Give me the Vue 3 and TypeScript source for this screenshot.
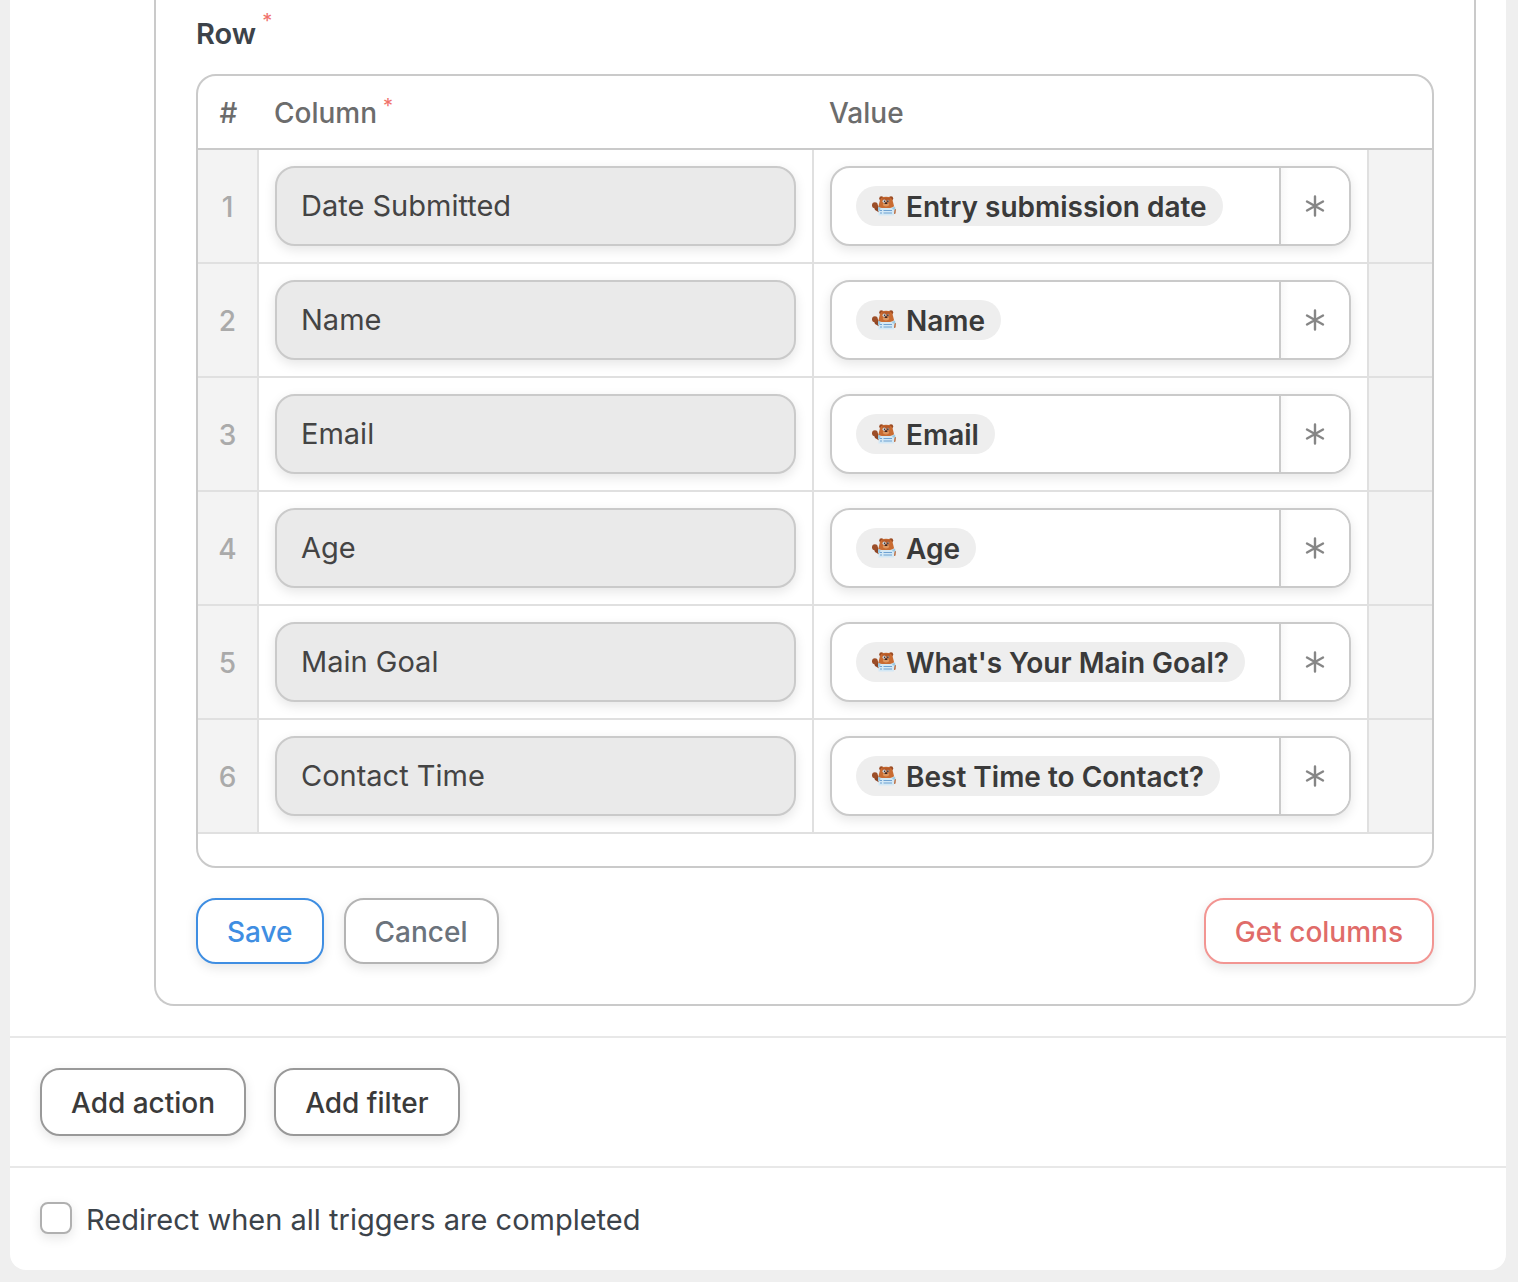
<script setup lang="ts">
import { ref } from 'vue'

interface Mapping {
  column: string
  value: string
}

const rows = ref<Mapping[]>([
  { column: 'Date Submitted', value: 'Entry submission date' },
  { column: 'Name', value: 'Name' },
  { column: 'Email', value: 'Email' },
  { column: 'Age', value: 'Age' },
  { column: 'Main Goal', value: "What's Your Main Goal?" },
  { column: 'Contact Time', value: 'Best Time to Contact?' },
])

const redirect = ref(false)
</script>

<template>
  <main class="page">
    <section class="card">
      <div class="step">
        <form class="panel" @submit.prevent>
          <h2 class="panel-title">Row<sup class="required">*</sup></h2>

          <div class="grid">
            <table class="mapping">
              <colgroup>
                <col class="col-index" />
                <col />
                <col />
                <col class="col-end" />
              </colgroup>
              <thead>
                <tr>
                  <th class="index-head" scope="col">#</th>
                  <th scope="col">Column<sup class="required">*</sup></th>
                  <th scope="col">Value</th>
                  <td></td>
                </tr>
              </thead>
              <tbody>
                <tr v-for="(row, i) in rows" :key="row.column">
                  <td class="index">{{ i + 1 }}</td>
                  <td class="field-cell">
                    <input class="column-input" type="text" readonly :value="row.column" :aria-label="`Column ${i + 1}`" />
                  </td>
                  <td class="field-cell">
                    <div class="value-field">
                      <div class="value-content">
                        <span class="chip">
                          <svg class="bear" viewBox="0 0 24 20" aria-hidden="true">
                            <path d="M1 9 5.500 9 8 13 8 17 3 14Z" fill="#8f4524" />
                            <circle cx="2.900" cy="9.200" r="2.900" fill="#9c4e28" />
                            <circle cx="9.400" cy="2.400" r="2.200" fill="#9a4a22" />
                            <circle cx="19" cy="2.400" r="2.200" fill="#9a4a22" />
                            <path d="M7.500 6Q8 .8 14 .8Q20.500 .8 21 6L22 10Q20 14 14 14Q7 14 6.500 10Z" fill="#c96b31" />
                            <path d="M10 2.500Q14 .5 18.500 2.500L17 4.500H11Z" fill="#b55a29" />
                            <circle cx="12.200" cy="5.200" r="1.700" fill="#c9cfd4" />
                            <circle cx="16" cy="5.200" r="1.400" fill="#a8897a" />
                            <circle cx="12.600" cy="5.300" r=".7" fill="#30282a" />
                            <circle cx="15.800" cy="5.300" r=".7" fill="#30282a" />
                            <ellipse cx="14" cy="8.600" rx="3.200" ry="1.800" fill="#dd965f" />
                            <ellipse cx="14" cy="7.200" rx="1.500" ry=".9" fill="#3b2421" />
                            <path d="M20.500 13 23.900 13 23.500 17.500 20.500 18.500Z" fill="#b6602f" />
                            <path d="M6.500 11.500 10 12 18 12 23 10.500 21.800 19.500H6.500Z" fill="#d3e8f5" />
                            <path d="M6 11 8.500 11.800 8 15H6ZM20 12 23 10.500 23.500 13.500H21Z" fill="#9ccbe4" />
                            <path d="M8 14.500H10M11.500 14.500H20M8 17H10M11.500 17H20" stroke="#6fa2d2" />
                          </svg>
                          <span>{{ row.value }}</span>
                        </span>
                      </div>
                      <button class="token-button" type="button" :aria-label="`Insert field for ${row.column}`">
                        <svg viewBox="0 0 22 22" aria-hidden="true">
                          <path d="M11 1.500V20.500M3 6.500 19 15.500M3 15.500 19 6.500" />
                        </svg>
                      </button>
                    </div>
                  </td>
                  <td class="end"></td>
                </tr>
              </tbody>
            </table>
          </div>

          <div class="panel-actions">
            <button class="btn save" type="submit">Save</button>
            <button class="btn cancel" type="button">Cancel</button>
            <button class="btn fetch" type="button">Get columns</button>
          </div>
        </form>
      </div>

      <div class="add-bar">
        <button class="btn add" type="button">Add action</button>
        <button class="btn add" type="button">Add filter</button>
      </div>

      <div class="redirect">
        <input id="redirect" v-model="redirect" type="checkbox" />
        <label for="redirect">Redirect when all triggers are completed</label>
      </div>
    </section>
  </main>
</template>

<style>
body {
  background: #efefef;
}
</style>

<style scoped>
.page {
  padding: 0 12px 12px 10px;
  font-family: Inter, "Liberation Sans", sans-serif;
  font-size: 28px;
  color: #3c434a;
}

.page * {
  box-sizing: border-box;
}

.card {
  background: #fff;
  border-radius: 0 0 16px 16px;
}

.step {
  padding: 0 30px 30px 144px;
}

.panel {
  padding: 14px 40px 40px;
  border: 2px solid #cacaca;
  border-top: 0;
  border-radius: 0 0 20px 20px;
}

.panel-title {
  margin: 0 0 20px;
  font-size: 29px;
  line-height: 40px;
  font-weight: 600;
}

.required {
  margin-left: 6px;
  font-size: 20px;
  line-height: 0;
  font-weight: 400;
  color: #f0716b;
}

.panel-title .required {
  vertical-align: 16px;
}

.grid {
  padding-bottom: 32px;
  border: 2px solid #cacaca;
  border-radius: 20px;
}

.mapping {
  width: 100%;
  table-layout: fixed;
  border-collapse: separate;
  border-spacing: 0;
}

.col-index {
  width: 61px;
}

.col-end {
  width: 63px;
}

.mapping thead th,
.mapping thead td {
  height: 74px;
  padding: 2px 15px 0;
  border-bottom: 2px solid #cacaca;
  color: #6c6c6c;
  font-weight: 500;
  line-height: 40px;
  text-align: left;
}

.mapping thead .index-head {
  padding: 2px 0 0;
  text-align: center;
}

.mapping tbody td {
  border-bottom: 2px solid #e0e0e0;
}

.mapping tbody td:not(:last-child) {
  border-right: 2px solid #e0e0e0;
}

.mapping tbody .index,
.mapping tbody .end {
  padding: 2px 0 0;
  background: #f3f3f3;
}

.index {
  color: #aaa;
  font-weight: 500;
  text-align: center;
}

.field-cell {
  padding: 16px;
}

.column-input {
  display: block;
  width: 100%;
  height: 80px;
  padding: 0 24px 2px;
  border: 2px solid #cacaca;
  border-radius: 20px;
  background: #eaeaea;
  box-shadow: 0 4px 12px rgba(0, 0, 0, 0.1);
  color: #444;
  font: inherit;
  font-size: 29px;
}

.value-field {
  display: flex;
  height: 80px;
  border: 2px solid #cacaca;
  border-radius: 20px;
  background: #fff;
  box-shadow: 0 4px 12px rgba(0, 0, 0, 0.1);
}

.value-content {
  display: flex;
  flex: 1;
  align-items: center;
  min-width: 0;
  padding: 0 24px;
}

.chip {
  display: flex;
  align-items: center;
  gap: 10px;
  height: 40px;
  padding: 0 16px;
  border-radius: 20px;
  background: #eee;
  color: #3a3a3a;
  font-weight: 600;
  line-height: 40px;
  white-space: nowrap;
}

.chip span {
  padding-top: 2px;
}

.bear {
  width: 24px;
  height: 20px;
}

.token-button {
  display: flex;
  align-items: center;
  justify-content: center;
  width: 70px;
  padding: 0;
  border: 0;
  border-left: 2px solid #cacaca;
  border-radius: 0 18px 18px 0;
  background: linear-gradient(to right, #f8f8f8, #fff 8px);
}

.token-button svg {
  width: 22px;
  height: 22px;
  fill: none;
  stroke: #868686;
  stroke-width: 2.4;
  stroke-linecap: round;
}

.panel-actions {
  display: flex;
  gap: 20px;
  margin-top: 30px;
}

.btn {
  height: 66px;
  padding: 2px 29px 0;
  border: 2px solid;
  border-radius: 20px;
  background: #fff;
  box-shadow: 0 4px 12px rgba(0, 0, 0, 0.1);
  font: inherit;
  font-weight: 500;
  white-space: nowrap;
}

.save {
  border-color: #3f8ee2;
  color: #3f8ee2;
}

.cancel {
  border-color: #b4b4b4;
  color: #6b737c;
}

.fetch {
  margin-left: auto;
  border-color: #f29592;
  color: #e06c69;
}

.add-bar {
  display: flex;
  gap: 28px;
  padding: 30px;
  border-top: 2px solid #e8e8e8;
}

.add {
  height: 68px;
  border-color: #999;
  color: #3a3a3a;
}

.redirect {
  display: flex;
  align-items: flex-start;
  gap: 14px;
  padding: 34px 30px 32px;
  border-top: 2px solid #e8e8e8;
  font-size: 29px;
  line-height: 36px;
}

.redirect input {
  appearance: none;
  width: 32px;
  height: 32px;
  margin: 0;
  border: 2px solid #b0b0b0;
  border-radius: 8px;
  background: #fff;
  box-shadow: 0 4px 12px rgba(0, 0, 0, 0.1);
}

.redirect input:checked {
  border-color: #3f8ee2;
  background: #3f8ee2;
}
</style>
